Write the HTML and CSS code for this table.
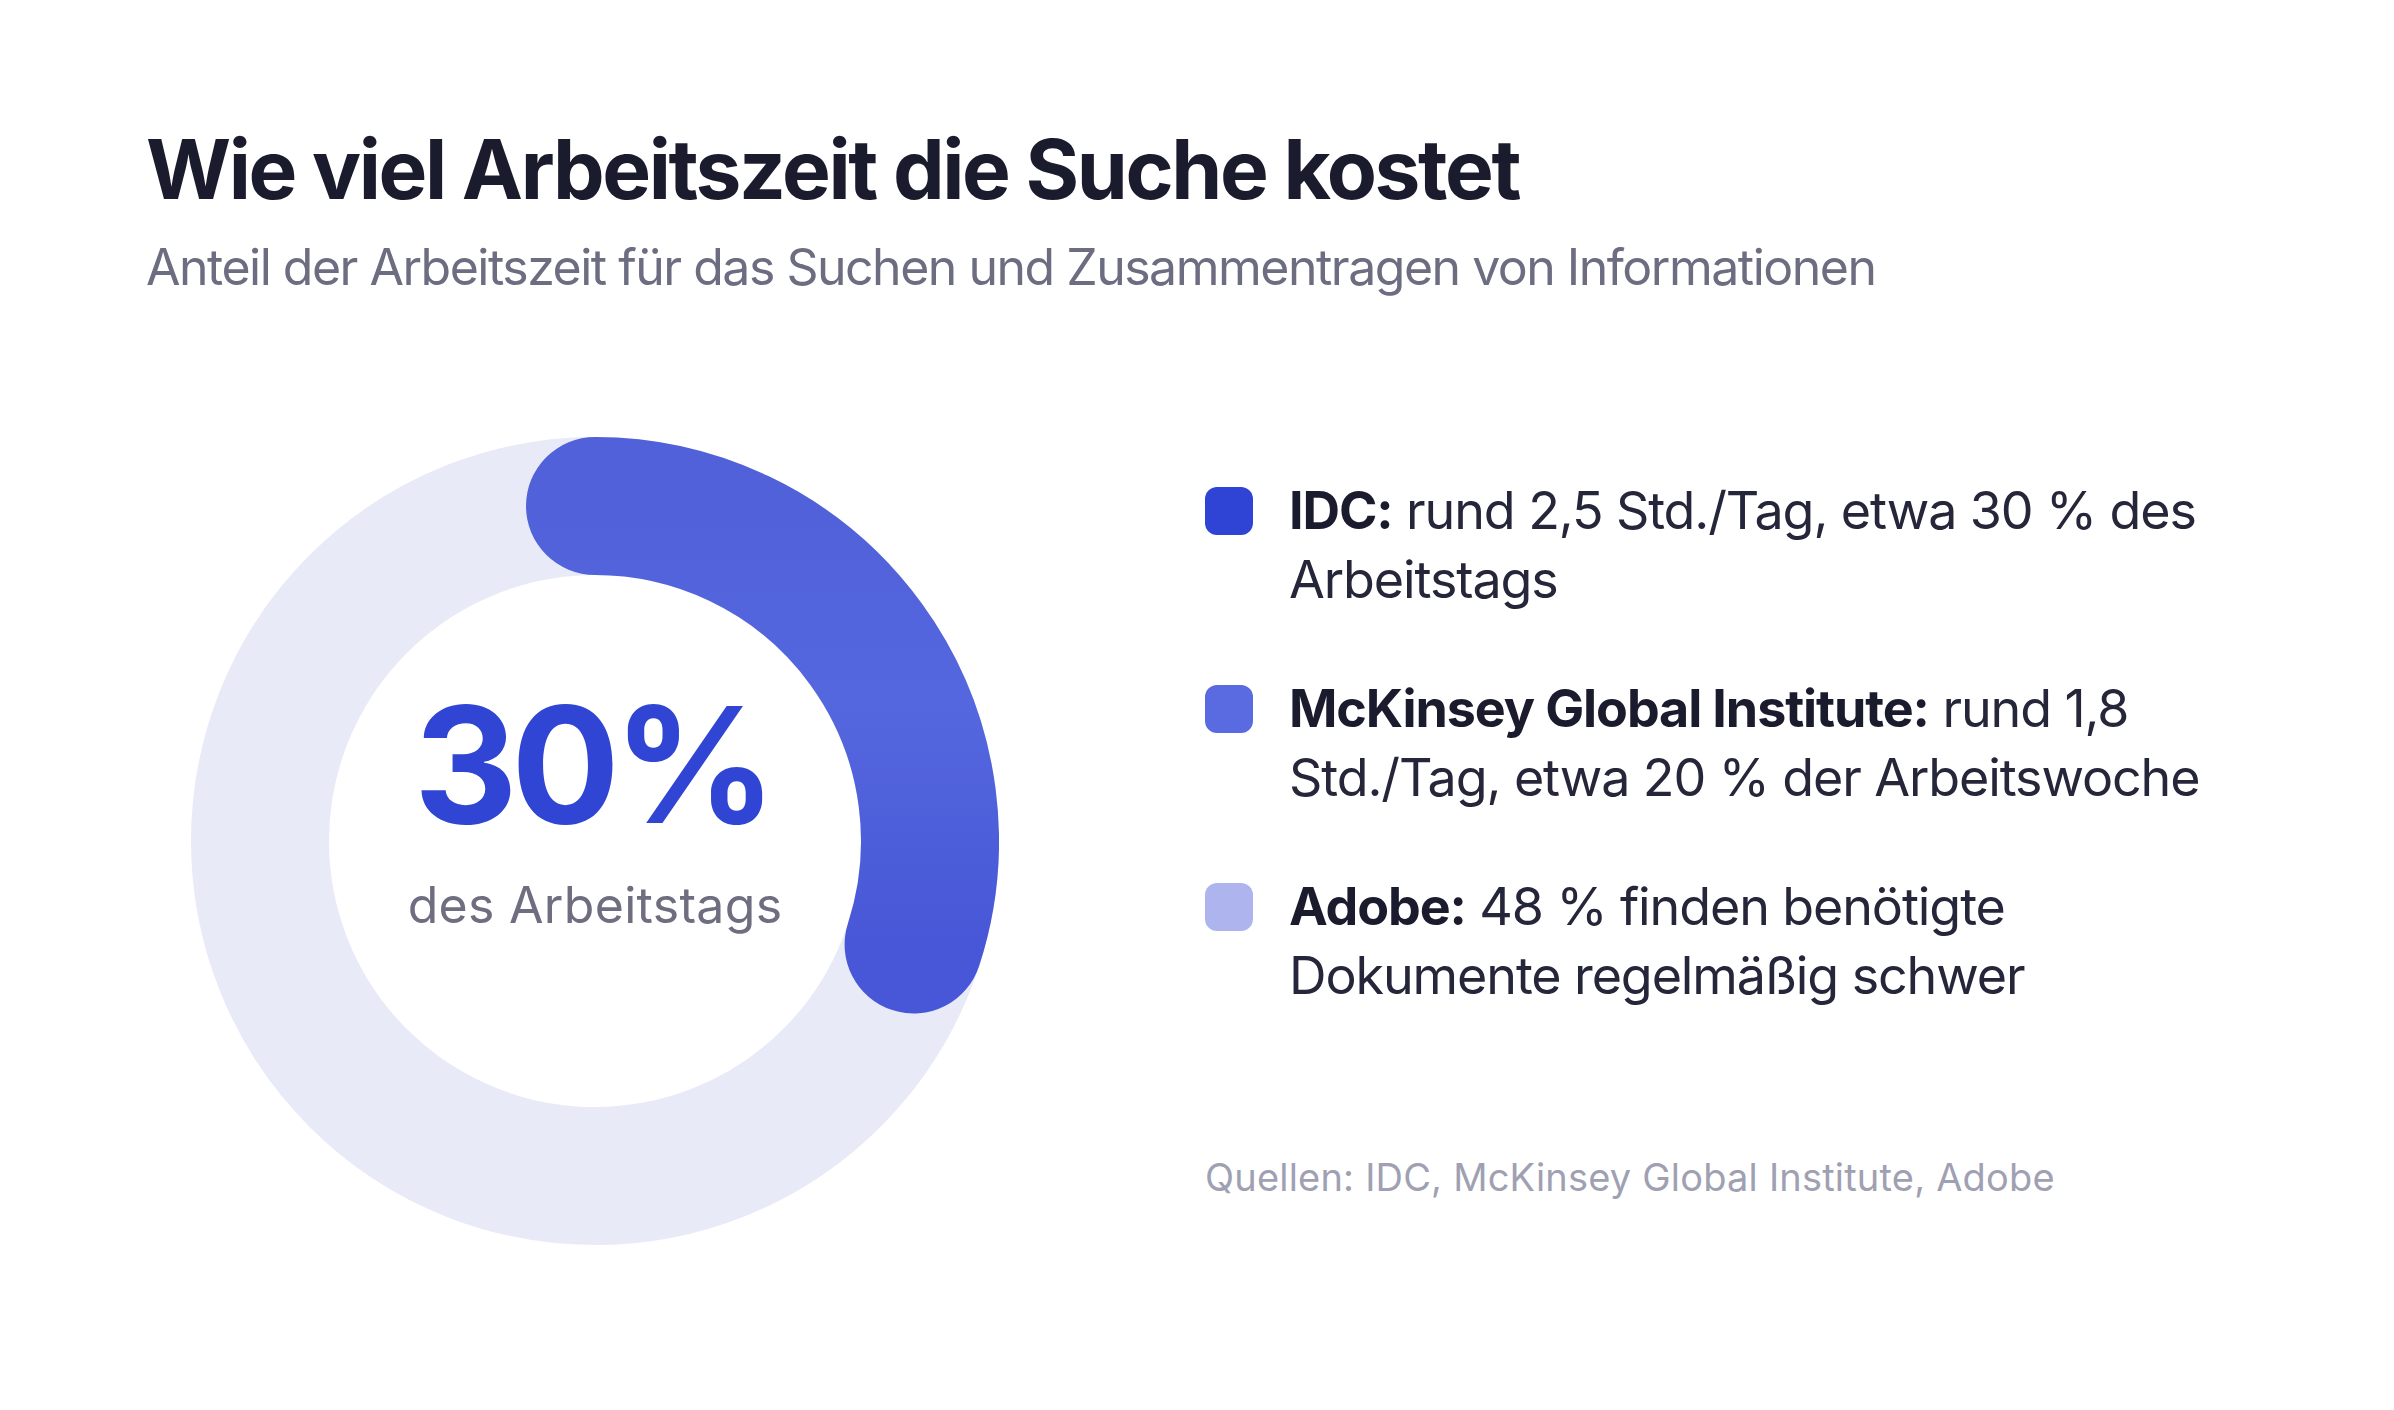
FILE: index.html
```html
<!DOCTYPE html>
<html lang="de">
<head>
<meta charset="utf-8">
<title>Wie viel Arbeitszeit die Suche kostet</title>
<link rel="stylesheet" href="styles.css">
</head>
<body>
<main class="page">
  <header class="head">
    <h1 class="title">Wie viel Arbeitszeit die Suche kostet</h1>
    <p class="subtitle">Anteil der Arbeitszeit für das Suchen und Zusammentragen von Informationen</p>
  </header>
  <section class="content">
    <div class="donut">
      <svg class="donut-svg" viewBox="0 0 808 808" width="808" height="808" aria-hidden="true">
        <defs>
          <linearGradient id="arcGrad" x1="0" y1="0" x2="0" y2="1">
            <stop offset="0" stop-color="#5061da"/>
            <stop offset="0.45" stop-color="#5567de"/>
            <stop offset="1" stop-color="#4757d7"/>
          </linearGradient>
        </defs>
        <circle cx="404" cy="404" r="335" fill="none" stroke="#e8eaf7" stroke-width="138"/>
        <path d="M404 69 A335 335 0 0 1 722.6 507.5" fill="none" stroke="url(#arcGrad)" stroke-width="138" stroke-linecap="round"/>
      </svg>
      <div class="donut-label">
        <div class="big">30%</div>
        <div class="big-sub">des Arbeitstags</div>
      </div>
    </div>
    <div class="side">
      <ul class="legend">
        <li class="item">
          <span class="swatch swatch-1"></span>
          <p class="item-text"><strong>IDC:</strong> rund 2,5 Std./Tag, etwa 30 % des<br>Arbeitstags</p>
        </li>
        <li class="item">
          <span class="swatch swatch-2"></span>
          <p class="item-text"><strong>McKinsey Global Institute:</strong> rund 1,8<br>Std./Tag, etwa 20 % der Arbeitswoche</p>
        </li>
        <li class="item">
          <span class="swatch swatch-3"></span>
          <p class="item-text"><strong>Adobe:</strong> 48 % finden benötigte<br>Dokumente regelmäßig schwer</p>
        </li>
      </ul>
      <p class="sources">Quellen: IDC, McKinsey Global Institute, Adobe</p>
    </div>
  </section>
</main>
</body>
</html>
```
FILE: styles.css
```css
* { box-sizing: border-box; }
html, body { margin: 0; padding: 0; background: #ffffff; }
body {
  font-family: Inter, "Noto Sans", "Liberation Sans", sans-serif;
  width: 2394px;
  height: 1410px;
  overflow: hidden;
}
.page {
  padding: 129px 0 0 146px;
}
.head { display: flex; flex-direction: column; gap: 31px; }
.title {
  margin: 0;
  font-size: 82px;
  line-height: 1;
  font-weight: 700;
  color: #1b1b2e;
  letter-spacing: -2.4px;
}
.subtitle {
  margin: 0;
  font-size: 50px;
  line-height: 1;
  font-weight: 400;
  color: #6d6d82;
  letter-spacing: -1.5px;
}
.content {
  display: flex;
  align-items: flex-start;
  margin-top: 145px;
  padding-left: 45px;
}
.donut {
  display: grid;
  width: 808px;
  height: 808px;
  flex: none;
}
.donut-svg { grid-area: 1 / 1; display: block; }
.donut-label {
  grid-area: 1 / 1;
  justify-self: center;
  align-self: start;
  padding-top: 247px;
  display: flex;
  flex-direction: column;
  align-items: center;
  gap: 35px;
}
.big {
  font-size: 161px;
  line-height: 1;
  font-weight: 700;
  color: #3045d4;
  letter-spacing: -6.5px;
  padding-right: 6px;
}
.big-sub {
  font-size: 50px;
  line-height: 1;
  color: #6e6e80;
  letter-spacing: 0.3px;
}
.side {
  margin-left: 206px;
  padding-top: 39px;
  display: flex;
  flex-direction: column;
}
.legend {
  list-style: none;
  margin: 0;
  padding: 0;
  display: flex;
  flex-direction: column;
  gap: 60px;
}
.item {
  display: flex;
  align-items: flex-start;
  gap: 36px;
}
.swatch {
  flex: none;
  width: 48px;
  height: 48px;
  border-radius: 12px;
  margin-top: 11px;
}
.swatch-1 { background: #2f44d4; }
.swatch-2 { background: #5a6ae0; }
.swatch-3 { background: #aeb5ee; }
.item-text {
  margin: 0;
  font-size: 52px;
  line-height: 69px;
  color: #26263a;
  letter-spacing: -1.1px;
}
.item-text strong { font-weight: 700; color: #1b1b2e; }
.sources {
  margin: 148px 0 0;
  font-size: 38px;
  line-height: 1;
  color: #a0a0b3;
  letter-spacing: 0.2px;
}
```
